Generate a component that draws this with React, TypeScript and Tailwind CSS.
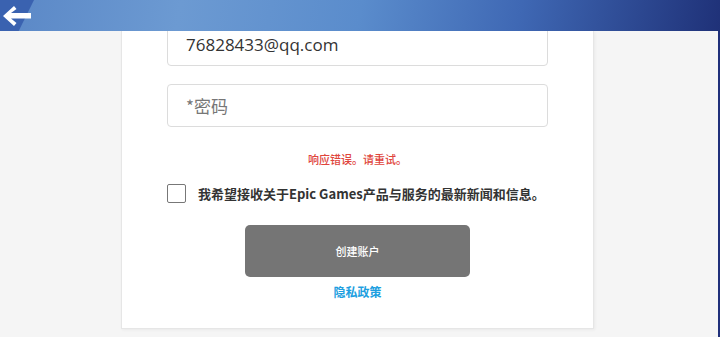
import React from 'react';

const cjk = { fontFamily: '"Noto Sans CJK SC", "Noto Sans", sans-serif' };

const BackArrow: React.FC = () => (
    <svg width="30" height="22" viewBox="0 0 30 22" className="absolute left-[2px] top-[5px]">
        <path d="M12 1 L1 11 L12 21 L14.5 18 L9 13.5 L29 13.5 L29 8 L9 8 L14.5 4 Z" fill="#ffffff" />
    </svg>
);

const App: React.FC = () => {
    return (
        <div className="w-[720px] h-[337px] flex flex-col overflow-hidden bg-[#f5f5f5]">
            <div className="relative h-[31px] shrink-0 bg-[linear-gradient(100deg,#5a87c6_0%,#6c9ad2_25%,#5a8ccc_50%,#3f68b4_72%,#1f3178_100%)]">
                <div className="absolute inset-y-0 left-0 w-[34px] bg-[#3a62b0] [clip-path:polygon(0_0,100%_0,55%_100%,0_100%)]" />
                <BackArrow />
            </div>

            <div className="flex-1 flex border-r-2 border-[#20307a] overflow-hidden">
                <div className="ml-[121px] w-[473px] h-[298px] bg-white border border-t-0 border-[#e6e6e6] shadow-[1px_1px_3px_rgba(0,0,0,0.05)] px-[45px] flex flex-col">
                    <div className="-mt-[8px] h-[43px] shrink-0 rounded-[4px] border border-[#dcdcdc] flex items-center pl-[18px] text-[17px] text-[#333]" style={{ fontFamily: '"Open Sans", sans-serif' }}>
                        76828433@qq.com
                    </div>
                    <div className="mt-[18px] h-[43px] shrink-0 rounded-[4px] border border-[#dcdcdc] flex items-center pl-[18px] text-[17px] text-[#777]" style={cjk}>
                        *密码
                    </div>
                    <p className="mt-[24px] text-center text-[11px] leading-[16px] font-medium text-[#e0453c]" style={cjk}>
                        响应错误。请重试。
                    </p>
                    <div className="mt-[17px] flex items-center">
                        <span className="w-[19px] h-[19px] border border-[#777] rounded-[2px] bg-white shrink-0" />
                        <span className="ml-[12px] text-[13px] font-bold text-[#333] leading-[19px]" style={cjk}>
                            我希望接收关于Epic Games产品与服务的最新新闻和信息。
                        </span>
                    </div>
                    <button className="mt-[22px] mx-auto w-[225px] h-[52px] rounded-[5px] bg-[#757575] text-white text-[11px] font-medium" style={cjk}>
                        创建账户
                    </button>
                    <a className="mt-[6px] text-center text-[12px] font-bold text-[#1e9fe0]" style={cjk}>
                        隐私政策
                    </a>
                </div>
            </div>
        </div>
    );
};

export default App;
